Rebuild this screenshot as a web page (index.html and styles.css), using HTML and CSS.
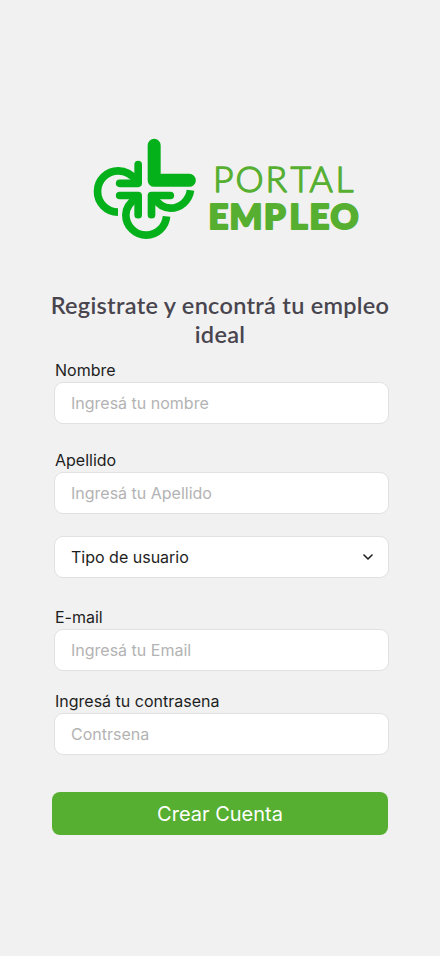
FILE: index.html
```
<!DOCTYPE html>
<html lang="es">
<head>
<meta charset="utf-8">
<title>Portal Empleo</title>
<link rel="stylesheet" href="styles.css">
</head>
<body>
<main class="page">
  <div class="brand">
    <svg class="mark" viewBox="0 0 360 360" fill="none" stroke="#05b11b" stroke-width="23" aria-hidden="true">
      <path stroke-width="39" stroke-linecap="round" stroke-linejoin="round" d="M207.500 46V151H313"/>
      <g stroke-linecap="round" stroke-linejoin="round">
        <path d="M159.500 104V160H104"/>
        <path d="M104 196.500H159.500V254"/>
        <path d="M256 196.500H199.500V254"/>
      </g>
      <path d="M99 246.500A62 62 0 0 1 100 122.500Q132 123 157 153"/>
      <path d="M244.500 259A61.500 61.500 0 0 1 184 315.500A61.500 61.500 0 0 1 122.500 254Q123 225 156 203"/>
      <path d="M316.500 181A61.500 61.500 0 0 1 256 234.500Q226 234 206 202"/>
    </svg>
    <svg class="wordmark" viewBox="0 0 170 90" fill="#56af31" stroke="#56af31" stroke-linejoin="round">
      <text class="portal" x="13 35.500 65.500 90.500 109.500 135.500" y="41.700">PORTAL</text>
      <text class="empleo" x="8.500 29.500 64 89.500 109.500 130.500" y="79">EMPLEO</text>
    </svg>
  </div>
  <h1 class="title">Registrate y encontrá tu empleo ideal</h1>
  <form class="form">
    <label class="field first"><span>Nombre</span><input type="text" placeholder="Ingresá tu nombre"></label>
    <label class="field second"><span>Apellido</span><input type="text" placeholder="Ingresá tu Apellido"></label>
    <div class="select">
      <span>Tipo de usuario</span>
      <svg class="chevron" viewBox="0 0 10 6" fill="none" stroke="#1e1e1e" stroke-width="1.600" stroke-linecap="round" stroke-linejoin="round"><path d="M1 1L5 5L9 1"/></svg>
    </div>
    <label class="field third"><span>E-mail</span><input type="email" placeholder="Ingresá tu Email"></label>
    <label class="field fourth"><span>Ingresá tu contrasena</span><input type="password" placeholder="Contrsena"></label>
    <button class="submit" type="button">Crear Cuenta</button>
  </form>
</main>
</body>
</html>
```
FILE: styles.css
```
* { box-sizing: border-box; }
body { margin: 0; background: #f1f1f1; font-family: Inter, sans-serif; color: #1e1e1e; }
.page { height: 956px; padding-top: 130px; overflow: hidden; }
.brand { display: flex; height: 120px; margin-left: 85px; }
.mark { width: 120px; height: 120px; }
.wordmark { width: 170px; height: 90px; margin: 20px 0 0 -5px; flex: none; }
.portal { font: 300 35.5px Lato, sans-serif; stroke-width: 1.3px; }
.empleo { font: 900 34.500px Lato, sans-serif; stroke-width: 2.200px; }
.title { width: 360px; height: 58px; margin: 41px auto 0; font: 600 23.500px/29px Lato, sans-serif; letter-spacing: 0.28px; text-align: center; color: #49454f; }
.form { width: 335px; margin: 10px 0 0 54px; font-size: 16px; }
.field { display: block; }
.field span { display: block; height: 23px; padding-left: 1px; line-height: 23px; }
.field input { display: block; width: 100%; height: 42px; padding: 0 16px; border: 1.500px solid #e1e1e1; border-radius: 9px; background: #fff; font: 400 16px Inter, sans-serif; }
.field input::placeholder { color: #b3b3b3; opacity: 1; }
.second { margin-top: 25px; }
.select { display: flex; align-items: center; justify-content: space-between; height: 42px; margin-top: 22px; padding: 0 15px 0 16px; border: 1.500px solid #e1e1e1; border-radius: 9px; background: #fff; }
.chevron { width: 10px; height: 6px; }
.third { margin-top: 28px; }
.fourth { margin-top: 19px; }
.submit { display: block; width: 336px; height: 43px; margin: 37px 0 0 -2px; padding: 0; border: 0; border-radius: 8px; background: #56af31; color: #fff; font: 400 20px Inter, sans-serif; }
```
